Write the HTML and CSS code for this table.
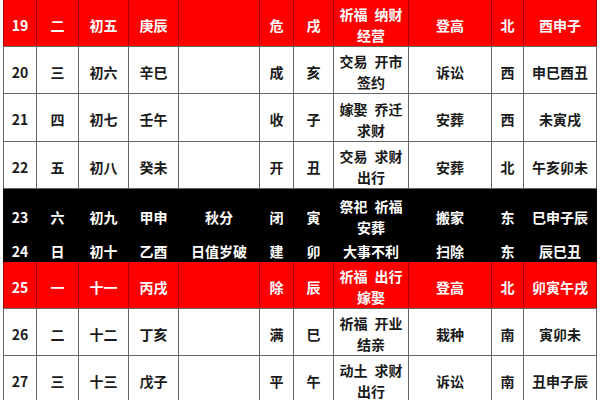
FILE: index.html
```html
<!DOCTYPE html>
<html lang="zh">
<head>
<meta charset="utf-8">
<link rel="stylesheet" href="styles.css">
</head>
<body>
<table class="cal">
<colgroup>
<col class="c1"><col class="c2"><col class="c3"><col class="c4"><col class="c5"><col class="c6"><col class="c7"><col class="c8"><col class="c9"><col class="c10"><col class="c11">
</colgroup>
<tbody>
<tr class="red r19"><td>19</td><td>二</td><td>初五</td><td>庚辰</td><td></td><td>危</td><td>戌</td><td>祈福 纳财<br>经营</td><td>登高</td><td>北</td><td>酉申子</td></tr>
<tr class="std"><td>20</td><td>三</td><td>初六</td><td>辛巳</td><td></td><td>成</td><td>亥</td><td>交易 开市<br>签约</td><td>诉讼</td><td>西</td><td>申巳酉丑</td></tr>
<tr class="std r21"><td>21</td><td>四</td><td>初七</td><td>壬午</td><td></td><td>收</td><td>子</td><td>嫁娶 乔迁<br>求财</td><td>安葬</td><td>西</td><td>未寅戌</td></tr>
<tr class="std r22"><td>22</td><td>五</td><td>初八</td><td>癸未</td><td></td><td>开</td><td>丑</td><td>交易 求财<br>出行</td><td>安葬</td><td>北</td><td>午亥卯未</td></tr>
<tr class="blk r23"><td>23</td><td>六</td><td>初九</td><td>甲申</td><td>秋分</td><td>闭</td><td>寅</td><td>祭祀 祈福<br>安葬</td><td>搬家</td><td>东</td><td>巳申子辰</td></tr>
<tr class="blk r24"><td>24</td><td>日</td><td>初十</td><td>乙酉</td><td>日值岁破</td><td>建</td><td>卯</td><td>大事不利</td><td>扫除</td><td>东</td><td>辰巳丑</td></tr>
<tr class="red"><td>25</td><td>一</td><td>十一</td><td>丙戌</td><td></td><td>除</td><td>辰</td><td>祈福 出行<br>嫁娶</td><td>登高</td><td>北</td><td>卯寅午戌</td></tr>
<tr class="std"><td>26</td><td>二</td><td>十二</td><td>丁亥</td><td></td><td>满</td><td>巳</td><td>祈福 开业<br>结亲</td><td>栽种</td><td>南</td><td>寅卯未</td></tr>
<tr class="std r27"><td>27</td><td>三</td><td>十三</td><td>戊子</td><td></td><td>平</td><td>午</td><td>动土 求财<br>出行</td><td>诉讼</td><td>南</td><td>丑申子辰</td></tr>
</tbody>
</table>
</body>
</html>
```
FILE: styles.css
```css
html, body {
  margin: 0;
  padding: 0;
  background: #ffffff;
}

.cal {
  margin: -1px 0 0 3px;
  width: 594px;
  table-layout: fixed;
  border-collapse: collapse;
  font-family: "Noto Sans CJK SC", "Noto Sans", sans-serif;
  font-weight: 700;
  font-size: 14px;
  line-height: 21px;
  word-spacing: 4px;
  color: #1a1a1a;
}

.c1 { width: 33px; }
.c2 { width: 42px; }
.c3 { width: 50px; }
.c4 { width: 50px; }
.c5 { width: 81px; }
.c6 { width: 34px; }
.c7 { width: 40px; }
.c8 { width: 75px; }
.c9 { width: 83px; }
.c10 { width: 32px; }
.c11 { width: 73px; }

.cal td {
  border: 1px solid #666666;
  text-align: center;
  vertical-align: middle;
  padding: 4px 0 0;
  white-space: nowrap;
  overflow: hidden;
}

.cal tr {
  height: 47px;
}

.cal .r21 { height: 48px; }
.cal .r22 { height: 46px; }
.cal .r23 { height: 53px; }
.cal .r24 { height: 19px; }
.cal .r27 { height: 47px; }

.red td {
  background: #ff0000;
  color: #ffffff;
  border-left-color: #a80000;
  border-right-color: #a80000;
}

.blk td {
  background: #000000;
  color: #ffffff;
  border-color: #000000;
}

.r24 td {
  padding: 0;
  line-height: 19px;
}
```
